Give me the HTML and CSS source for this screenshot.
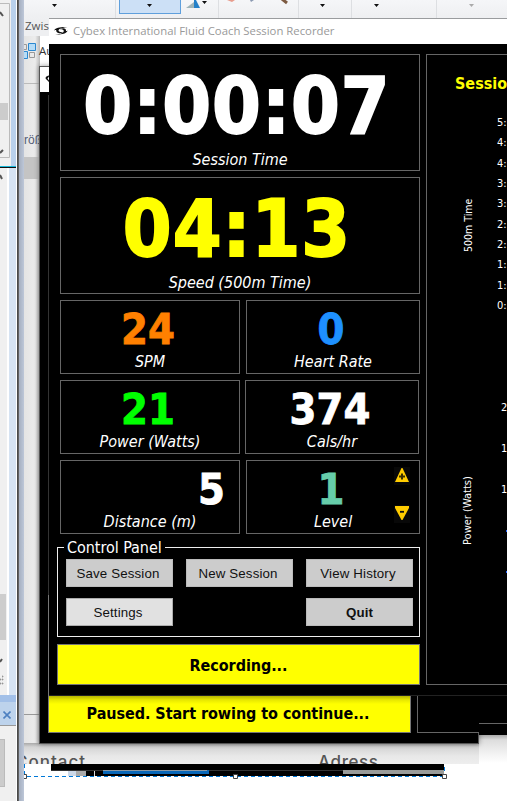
FILE: index.html
```html
<!DOCTYPE html>
<html lang="en">
<head>
<meta charset="utf-8">
<title>Cybex International Fluid Coach Session Recorder</title>
<link rel="stylesheet" href="styles.css">
</head>
<body>
<div class="desktop">
  <div class="ribbon">
    <span class="ribbon-group">Zwis</span>
    <svg class="ribbon-art" width="488" height="19" viewBox="0 0 488 19">
      <rect x="100.500" y="-2" width="61" height="15.500" fill="#cce0f6" stroke="#5f9fdc"/>
      <path d="M96.500 0v18M199.500 0v18M279.500 0v18M332.500 0v18M417.500 0v18" stroke="#dddfe2"/>
      <path d="M33 4h5l-2.500 3zM128 4h5l-2.500 3zM183 1h5l-2.500 3zM301 4h5l-2.500 3zM355 4h5l-2.500 3z" fill="#111"/>
      <path d="M450 4h5l-2.500 3z" fill="#aaa"/>
      <path d="M167 8l8-6v6z" fill="#9fb4b8"/><path d="M175 0h2l4 8h-6z" fill="#2480c8"/>
      <path d="M208 0l5 2 3-2z" fill="#e79c8c"/><path d="M231 0l4 0-3 2z" fill="#8a98b0"/>
      <path d="M263 -1l5 4" stroke="#7d5b42" stroke-width="3"/>
    </svg>
  </div>
  <div class="document">
    <div class="doc-tools">
      <svg width="12" height="16" viewBox="0 0 12 16"><path d="M0 1.500h2.500v5H0M5.500 9.500h5v5h-5z" fill="none" stroke="#999"/><path d="M4.500.500h7v7h-7zM-3 8.500h6.500v7H-3z" fill="#b5dcf7" stroke="#2b88d0"/></svg>
      <span>Au</span>
    </div>
    <div class="doc-size">röß</div>
    <div class="doc-block"></div>
    <div class="doc-line"></div>
  </div>
  <div class="page-strip"><span class="contact">Contact</span><span class="address">Adress</span></div>
  <div class="strip-end"></div>

  <div class="dock">
    <div class="dock-top">
      <svg width="12" height="160" viewBox="0 0 12 160"><path d="M0 12l3 4M0 153l3-3" stroke="#555" stroke-width="2"/><path d="M0 103h8v17H0z" fill="#ccc"/><path d="M0 3.500h9.500v154H0" fill="none" stroke="#bbb"/></svg>
    </div>
    <div class="dock-mid">
      <svg width="9" height="520" viewBox="0 0 9 520"><path d="M0 7l2 4M0 494l2-3" fill="none" stroke="#555" stroke-width="2"/><path d="M0 426h6v46H0z" fill="#cdcdcd"/><path d="M0 511h1v1H0M2 508h1v1H2M2 511h1v1H2M0 515h1v1H0M2 515h1v1H2" stroke="#aaa"/></svg>
    </div>
    <div class="dock-tab"><svg width="8" height="8" viewBox="0 0 8 8"><path d="M.500.500l7 7M7.500.500l-7 7" stroke="#4d80c0" stroke-width="1.600"/></svg></div>
    <div class="dock-bottom"></div>
  </div>
  <div class="dock-edge"></div>

  <section class="window window-back">
    <div class="back-title"><svg width="9" height="25" viewBox="0 0 9 25"><path d="M9 8.500C6 9 4.500 11 6.500 12.500L9 15V13.500L7.500 11.500L9 9.500z" fill="#111"/></svg></div>
    <div class="back-inner"></div>
  </section>
  <section class="window-right"></section>
  <div class="paused-row">
    <div class="paused">Paused. Start rowing to continue...</div>
    <div class="paused-side"></div>
  </div>

  <section class="window window-main">
    <header class="titlebar">
      <svg width="14" height="10" viewBox="0 0 14 10"><path d="M0 4.500C2 1.500 6 .800 13.500 1C9 1.700 5 2.500 4.500 4.300C4.300 6 7 6.500 9.500 5.800C6.500 8.200 1.500 7.200 2.200 4C1.500 4 1 4 0 4.500z" fill="#111"/><path d="M13.800 4.500C12 8 7 8.800 1 8.500C7 8 9.700 7 9.800 5C9.800 3.500 7.500 3 6 3.300C8.500 1.700 12.500 2 12 5C12.800 5 13 5 13.800 4.500z" fill="#111"/></svg>
      <h1>Cybex International Fluid Coach Session Recorder</h1>
    </header>
    <main class="content">
      <div class="left">
        <div class="tiles">
          <div class="tile big"><div class="value">0:00:07</div><div class="label">Session Time</div></div>
          <div class="tile big"><div class="value yellow">04:13</div><div class="label">Speed (500m Time)</div></div>
          <div class="pair">
            <div class="tile"><div class="value orange">24</div><div class="label">SPM</div></div>
            <div class="tile"><div class="value blue">0</div><div class="label">Heart Rate</div></div>
          </div>
          <div class="pair shifted">
            <div class="tile"><div class="value green">21</div><div class="label">Power (Watts)</div></div>
            <div class="tile"><div class="value">374</div><div class="label">Cals/hr</div></div>
          </div>
          <div class="pair">
            <div class="tile"><div class="value distance">5</div><div class="label">Distance (m)</div></div>
            <div class="tile"><div class="value aqua">1</div><div class="label">Level</div>
              <svg class="stepper" width="16" height="56" viewBox="0 0 16 56"><path d="M0 0h16v18H0zM0 38h16v18H0z" fill="#080808"/><path d="M7.500 1h1L15 15H1z" fill="#fc0"/><path d="M1 39h14v2L8.500 53h-1L1 41z" fill="#fc0"/><path d="M5 9.500h6M8 6.500v6" stroke="#3a3000" stroke-width="2"/><path d="M6 44.800h4" stroke="#111" stroke-width="1.800"/></svg>
            </div>
          </div>
        </div>
        <fieldset class="control">
          <legend>Control Panel</legend>
          <div class="buttons">
            <button>Save Session</button><button>New Session</button><button>View History</button>
            <button class="light">Settings</button><span></span><button class="quit">Quit</button>
          </div>
        </fieldset>
        <div class="recording">Recording...</div>
      </div>
      <aside class="charts">
        <h2>Session</h2>
        <div class="chart pace">
          <span class="axis">500m Time</span>
          <div class="ticks"><span>5:00</span><span>4:30</span><span>4:00</span><span>3:30</span><span>3:00</span><span>2:30</span><span>2:00</span><span>1:30</span><span>1:00</span><span>0:30</span></div>
        </div>
        <div class="chart power">
          <span class="axis">Power (Watts)</span>
          <div class="ticks"><span>200</span><span>150</span><span>100</span><i></i><i></i></div>
        </div>
      </aside>
    </main>
  </section>

  <svg class="selection" width="430" height="20" viewBox="0 0 430 20">
    <path d="M27 0H420V12H62V7H27z" fill="#000"/><path d="M44 7h8v5h-8z" fill="#ccd8e8"/><path d="M52 7h10v5H52z" fill="#aaa"/>
    <path d="M27 6.500h394" stroke="#333"/>
    <path d="M79 6h106v4H79z" fill="#0867b8"/><path d="M79 6.500h104" stroke="#8a9aa6"/><path d="M319 6h101v4H319z" fill="#999b99"/><path d="M70.500 7v5" stroke="#ddd"/>
    <path d="M.500 0v10M420.500 3v4" stroke="#0078d7" stroke-dasharray="4 3"/><path d="M3 12.500h417" stroke="#0078d7" stroke-dasharray="4 3"/>
    <path d="M-1 10.500h3.500v4H-1M209.500 10.500h4v4h-4zM418.500 10.500h4v4h-4z" fill="#fff" stroke="#444"/>
  </svg>
</div>
</body>
</html>
```

FILE: styles.css
```css
* { box-sizing: border-box; }
body { margin: 0; background: #fff; overflow: hidden; }
.desktop { position: relative; width: 526px; height: 807px; overflow: hidden; font-family: "DejaVu Sans Condensed", "DejaVu Sans", sans-serif; font-stretch: condensed; }

.ribbon { position: absolute; left: 19px; top: 0; width: 488px; height: 36px; background: linear-gradient(#f5f6f8, #eeeff1 19px); }
.ribbon-art { position: absolute; left: 0; top: 0; }
.ribbon::after { content: ""; position: absolute; left: 30px; right: 0; top: 18px; height: 1px; background: #9a9c9e; }
.ribbon-group { position: absolute; left: 6px; top: 18px; font: 11.500px/16px "Open Sans", sans-serif; color: #555; }

.document { position: absolute; left: 24px; top: 36px; width: 16px; height: 728px; background: linear-gradient(90deg, #e4e4e4, #ececec 70%, #bbb); padding-top: 7px; }
.doc-tools { display: flex; gap: 3px; width: 30px; height: 41px; border-bottom: 1px solid #bbb; font: 11.500px/16px "Open Sans", sans-serif; color: #333; }
.doc-size { margin-top: 46px; width: 16px; overflow: hidden; font: 12px/20px "Liberation Sans", sans-serif; color: #555e78; }
.doc-block { margin-top: 7px; height: 22px; background: #c4c4c4; }
.doc-line { margin-top: 535px; height: 1px; background: #999; }

.page-strip { position: absolute; left: 24px; top: 743px; width: 455px; height: 21px; overflow: hidden; display: flex; background: linear-gradient(#aaa, #d4d4d4 4px, #e8e8e8 13px, #eee); color: #555; font: 500 17px/38px Inter, sans-serif; }
.contact { width: 303px; margin-left: -9px; letter-spacing: 1px; }
.address { letter-spacing: .6px; }
.strip-end { position: absolute; left: 479px; top: 735px; width: 28px; height: 28px; background: linear-gradient(#aaa, #ddd 5px, #f0f0f0 17px, #fff); }

.dock { position: absolute; left: 0; top: 0; width: 17px; height: 801px; background: #f0f0f0; border-right: 1px solid #fff; }
.dock-top { height: 167px; background: linear-gradient(90deg, #f0f0f0 11px, #b9d1ec 11px); border-bottom: 1px solid #18b8d8; }
.dock-top svg, .dock-mid svg { display: block; }
.dock-mid { height: 535px; border-top: 1px solid #111; background: linear-gradient(90deg, #f0f0f0 7px, #fff 7px, #fff 9px, #d6e3f2 9px); border-bottom: 7px solid #a2c0e8; }
.dock-tab { height: 24px; display: flex; align-items: center; padding: 3px 0 0 3px; background: #bdd3ec; border-bottom: 1px solid #999; }
.dock-bottom { width: 5px; height: 48px; margin-top: 13px; background: #ccc; border: 1px solid #bbb; border-left: 0; }
.dock-edge { position: absolute; left: 17px; top: 0; width: 7px; height: 801px; background: linear-gradient(90deg, #4a4a4a 1px, #777 2px, #a5afc0 2px, #bdc7d8); }

.window-back { position: absolute; left: 39px; top: 66px; width: 440px; height: 678px; background: #000; border: 1px solid #555; box-shadow: 0 0 5px #0006; }
.back-title { width: 9px; height: 25px; background: #fff; }
.back-title svg { display: block; }
.back-inner { width: 9px; height: 505px; border-right: 1px solid #333; margin-top: 3px; }
.window-right { position: absolute; left: 479px; top: 600px; width: 28px; height: 135px; background: linear-gradient(#000 123px, #666 123px, #666 124px, #000 124px); }
.paused-row { position: absolute; left: 48px; top: 595px; width: 431px; height: 138px; display: flex; gap: 6px; }
.paused { width: 363px; padding: 106px 3px 0 0; background: linear-gradient(#ff0 98px, #a8a800 99px, #e8e800 104px, #ff0 108px); border: 1px solid #777; font-weight: bold; font-size: 16px; line-height: 24px; letter-spacing: -.06px; text-align: center; color: #000; }
.paused-side { width: 62px; border: 1px solid #666; border-width: 0 0 1px 1px; background: #000; }

.window-main { position: absolute; left: 49px; top: 19px; width: 458px; height: 677px; overflow: hidden; background: #000; border-bottom: 1px solid #222; }
.titlebar { height: 25px; display: flex; align-items: center; gap: 5px; padding: 0 0 2px 5px; background: #fff; }
.titlebar h1 { margin: 0; font: 11.350px/22px "Open Sans", sans-serif; color: #999; white-space: nowrap; }
.content { display: flex; gap: 6px; padding: 10px 0 0 8px; }
.left { flex: none; width: 363px; }
.tiles { display: flex; flex-direction: column; gap: 6px; padding-left: 3px; }
.tile { position: relative; height: 74px; border: 1px solid #666; color: #fff; text-align: center; }
.tile.big { height: 117px; }
.value { height: 50px; font-weight: bold; font-size: 43px; line-height: 56px; padding-right: 4px; -webkit-text-stroke: .8px currentColor; }
.big .value { height: 94px; font-size: 78px; line-height: 102px; letter-spacing: 1px; padding-right: 6px; -webkit-text-stroke-width: 1.800px; }
.label { font-style: italic; font-size: 16px; line-height: 22px; }
.pair { display: grid; grid-template-columns: 180px 174px; gap: 6px; }
.pair.shifted { column-gap: 5px; }
.yellow { color: #ff0; }
.orange { color: #ff8000; }
.blue { color: #1e90ff; }
.green { color: #0f0; }
.aqua { color: #66cdaa; }
.value.distance { text-align: right; padding-right: 14px; }
.stepper { position: absolute; left: 147px; top: 6px; }

.control { position: relative; margin: 5px 0 0; width: 363px; height: 98px; border: 1px solid #eee; padding: 0 6px 0 8px; min-width: 0; color: #fff; }
.control legend { margin-left: -2px; padding: 0 3px; font-size: 16px; line-height: 17px; letter-spacing: -.05px; }
.buttons { display: grid; grid-template-columns: repeat(3, 107px); gap: 11px 13px; margin-top: 3px; }
.buttons button { height: 28px; padding: 1px 3px 0 0; border: 1px solid #bbb; background: #ccc; color: #111; font: 13.300px/26px "Liberation Sans", sans-serif; letter-spacing: .15px; }
.buttons .light { background: #e1e1e1; border-color: #adadad; }
.buttons .quit { font-weight: bold; padding-right: 0; }
.recording { margin-top: 7px; height: 41px; border: 1px solid #777; background: #ff0; color: #000; font-size: 16px; font-weight: bold; line-height: 41px; letter-spacing: -.06px; text-align: center; }

.charts { flex: none; width: 200px; height: 631px; border: 1px solid #666; color: #fff; }
.charts h2 { margin: 18px 0 0 28px; font-size: 16px; line-height: 22px; color: #ff0; }
.chart { display: flex; font-size: 11px; }
.axis { writing-mode: vertical-rl; transform: rotate(180deg); width: 14px; line-height: 14px; text-align: center; }
.ticks { display: flex; flex-direction: column; line-height: 14px; }
.pace { height: 197px; margin-top: 21px; }
.pace .axis { margin-left: 34px; height: 219px; font-size: 10.500px; }
.pace .ticks { margin-left: 22px; gap: 6.330px; }
.power { margin-top: 88px; height: 220px; }
.power .axis { margin-left: 34px; height: 220px; }
.power .ticks { margin-left: 26px; gap: 27px; }
.power .ticks i { margin-left: 5px; height: 14px; width: 2px; background: linear-gradient(transparent 6px, #2060ff 6px, #2060ff 8px, transparent 8px); }

.selection { position: absolute; left: 24px; top: 764px; }
```
